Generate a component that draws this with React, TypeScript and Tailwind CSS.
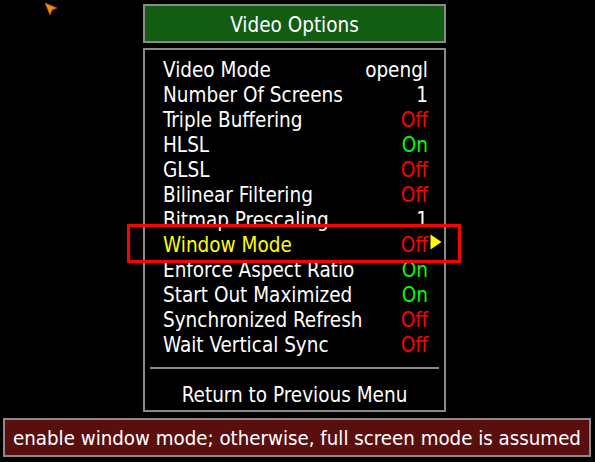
const rows: { label: string; value: string; color: string }[] = [
  { label: "Video Mode", value: "opengl", color: "text-white" },
  { label: "Number Of Screens", value: "1", color: "text-white" },
  { label: "Triple Buffering", value: "Off", color: "text-[#ff0000]" },
  { label: "HLSL", value: "On", color: "text-[#00ff00]" },
  { label: "GLSL", value: "Off", color: "text-[#ff0000]" },
  { label: "Bilinear Filtering", value: "Off", color: "text-[#ff0000]" },
  { label: "Bitmap Prescaling", value: "1", color: "text-white" },
  { label: "Window Mode", value: "Off", color: "text-[#ff0000]" },
  { label: "Enforce Aspect Ratio", value: "On", color: "text-[#00ff00]" },
  { label: "Start Out Maximized", value: "On", color: "text-[#00ff00]" },
  { label: "Synchronized Refresh", value: "Off", color: "text-[#ff0000]" },
  { label: "Wait Vertical Sync", value: "Off", color: "text-[#ff0000]" },
];

export default function App() {
  return (
    <div
      className="relative w-[595px] h-[462px] bg-black overflow-hidden text-[20.5px] leading-none text-white"
      style={{ fontFamily: '"DejaVu Sans Condensed", "DejaVu Sans", sans-serif' }}
    >
      {/* mouse pointer */}
      <svg className="absolute left-[44px] top-[2px]" width="16" height="16" viewBox="0 0 16 16">
        <path d="M1 1 L13 6 L8 8 L6 13 Z" fill="#f08a10" stroke="#b85a00" strokeWidth="0.6" />
      </svg>

      <div className="pt-[4px] pl-[143px]">
        <div className="w-[303px] h-[39px] pt-[3px] bg-[#125c14] border-2 border-[#8a8a8a] flex items-center justify-center">
          Video Options
        </div>

        <div className="mt-[5px] w-[303px] h-[364px] border-2 border-[#8a8a8a] pt-[8px]">
          {rows.map((row) => (
            <div key={row.label} className="h-[25px] flex items-center pl-[18px] pr-[16px]">
              <span className={row.label === "Window Mode" ? "text-[#ffff00]" : ""}>{row.label}</span>
              <span className={"ml-auto " + row.color}>{row.value}</span>
            </div>
          ))}
          <div className="mt-[9px] mx-[5px] h-[2px] bg-[#8a8a8a]" />
          <div className="h-[52px] flex items-center justify-center">Return to Previous Menu</div>
        </div>
      </div>

      {/* selected row marker */}
      <div className="absolute left-[127px] top-[224px] w-[334px] h-[39px] border-[3px] border-[#ff0000]" />
      <svg className="absolute left-[430px] top-[234px]" width="12" height="16" viewBox="0 0 12 16">
        <path d="M0.5 0.5 L11.5 8 L0.5 15.5 Z" fill="#ffff00" />
      </svg>

      <div className="absolute left-[3px] top-[418px] w-[588px] h-[39px] pt-[2px] text-[20.3px] bg-[#5a0f0f] border-2 border-[#8a8a8a] flex items-center justify-center">
        enable window mode; otherwise, full screen mode is assumed
      </div>
    </div>
  );
}
